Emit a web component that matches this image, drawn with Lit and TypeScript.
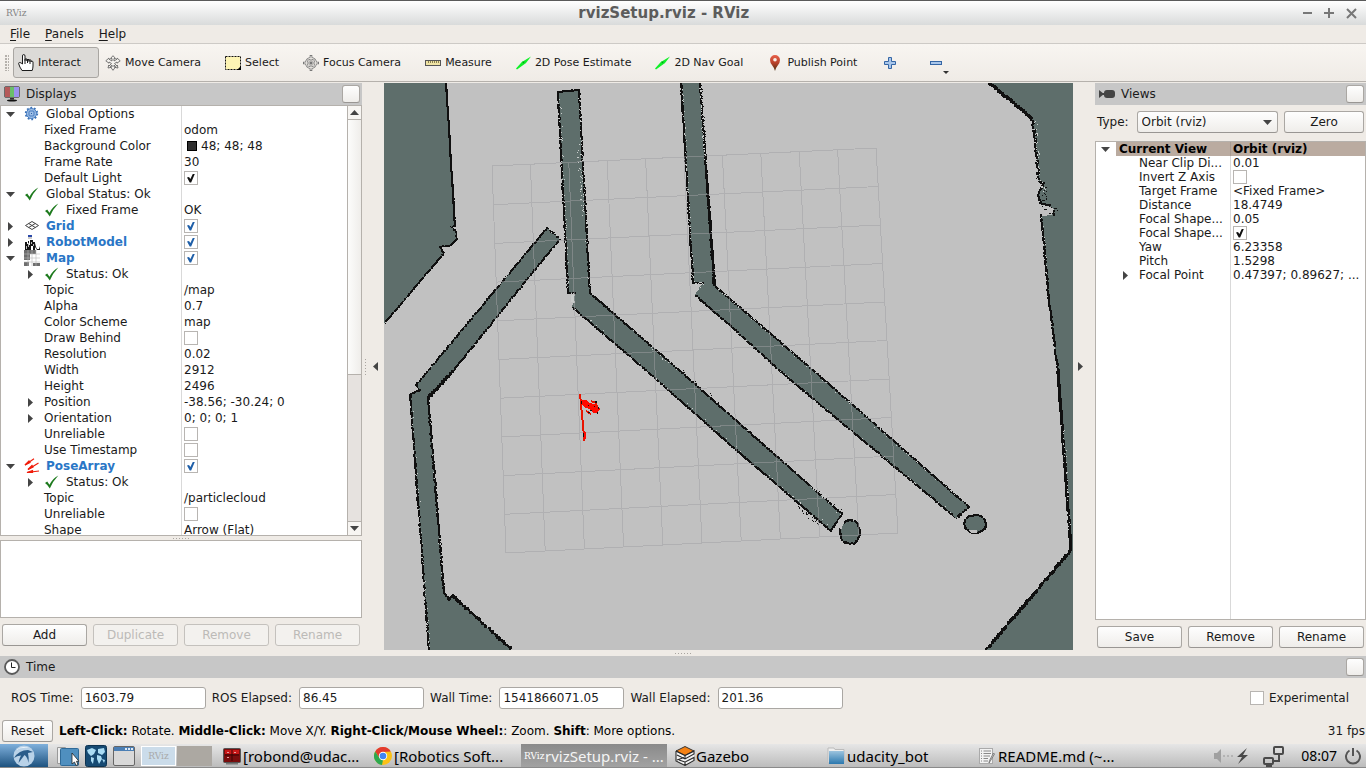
import { LitElement, html, css, svg, nothing } from "lit";
import { customElement, property } from "lit/decorators.js";
import { classMap } from "lit/directives/class-map.js";

interface Row {
  name: string;
  level?: number;
  arrow?: "open" | "closed";
  icon?: string;
  value?: string;
  check?: boolean;
  swatch?: boolean;
  bold?: boolean;
  head?: boolean;
}

/* ---------- icons ---------- */

const treeIcons: Record<string, unknown> = {
  gear: svg`<svg width="16" height="16" viewBox="0 0 16 16"><circle cx="7.500" cy="7.500" r="5.700" fill="none" stroke="#3a72b8" stroke-width="2" stroke-dasharray="1.800 1.780"/><circle cx="7.500" cy="7.500" r="5" fill="#9fc0e8" stroke="#4479bd"/><rect x="5" y="5" width="5" height="5" rx="1" fill="none" stroke="#4479bd"/><rect x="7" y="7" width="1" height="1" fill="#2f5f9f"/></svg>`,
  check: svg`<svg width="16" height="16" viewBox="0 0 16 16"><path d="M1 9l2.200-1.400 2.300 3.200Q8.500 4.500 14.300 1.500 9 7 5.800 14.500 4 11 1 9z" fill="#1d7a1d"/></svg>`,
  grid: svg`<svg width="16" height="16" viewBox="0 0 16 16"><path d="M1.500 7.500L8 3.500l6.500 4L8 11.500zM4.700 5.500l6.600 4M11.300 5.500l-6.600 4" fill="none" stroke="#444"/></svg>`,
  robot: svg`<svg width="16" height="16" viewBox="0 0 16 16"><rect x="4" y="1" width="4" height="2" fill="#2b49a8"/><rect x="4" y="3" width="4" height="2" fill="#ccc"/><path d="M1 8h2v2h1V7h1v4h1V6h3v2h2v1l1 4 1 2h2l1-3v4h-3l-2-3v3H9v-4H7v4H1z" fill="#141414"/><path d="M4 9h1v4H4zM7 8h1v2H7zM2 12h1v3H2zM9 10h1v2H9z" fill="#bbb"/></svg>`,
  map: svg`<svg width="16" height="16" viewBox="0 0 16 16"><rect width="16" height="16" fill="#fff"/><path d="M0 0h12v4H6v6H0zM0 12h5v4H0zM9 13h7v3H9z" fill="#6e6e6e"/><path d="M4 0v16M8 0v16M12 0v16M0 4h16M0 8h16M0 12h16" stroke="#bbb" stroke-width=".6" fill="none"/></svg>`,
  poses: svg`<svg width="16" height="16" viewBox="0 0 16 16"><g stroke="#f01c0a" stroke-width="1.200" fill="#f01c0a"><path d="M1 7L10 .8M4 11.500L14.500 5M3 14.500L15 13"/><path d="M1 7l4-4 1 1.500zM4 11.500l4-4 1 1.500zM3 14.500l5.500-2v2z"/></g></svg>`,
};

const hand = svg`<svg width="16" height="17" viewBox="0 0 16 17"><path d="M4.500 10V2q0-1.500 1.200-1.500T7 2v4.500V5h2v2V5.500h2v2-1.500h2v2q0-.8 1-.8t1 .8V12q0 2-.8 4.500H4Q1.500 13 .7 9.800.5 8.500 1.600 8.500 3 8.500 4.500 10z" fill="#fff" stroke="#1b1b1b"/><path d="M7 6v4M9.500 6v3M12 7v3" stroke="#1b1b1b" fill="none"/></svg>`;
const moveCam = svg`<svg width="16" height="16" viewBox="0 0 16 16"><path d="M8 .7l2.500 2.800H9V6l3-1.800V3l3.200 2.800L12 8.200V7L9.500 8.500 12 11l.2-1 .8 3-3-.6.800-.8L9 10v2h1.500L8 15.300 5.500 12H7v-2l-1.800 1.600.8.800-3 .6.800-3 .2 1 2.500-2.500L4 7v1.200L.8 5.800 4 3v1.200L7 6V3.500H5.500z" fill="#f4f2ee" stroke="#6a6a6a" stroke-width=".9"/></svg>`;
const selectIcon = svg`<svg width="16" height="14" viewBox="0 0 16 14"><rect x=".5" y=".5" width="15" height="13" fill="#fdf4b4" stroke="#111" stroke-dasharray="2 1"/><path d="M16 10v4h-4z" fill="#000"/></svg>`;
const focusIcon = svg`<svg width="16" height="16" viewBox="0 0 16 16"><circle cx="8" cy="8" r="4.800" fill="none" stroke="#777" stroke-width="2.400"/><path d="M8 0v16M0 8h16" stroke="#777" stroke-width="2.600"/><circle cx="8" cy="8" r="4.800" fill="none" stroke="#f0ede8" stroke-width="1"/><path d="M8 1v14M1 8h14" stroke="#f0ede8"/><rect x="7" y="7" width="2" height="2" fill="#777"/></svg>`;
const rulerIcon = svg`<svg width="16" height="16" viewBox="0 0 16 16"><rect x=".5" y="5.500" width="15" height="5" fill="#efe3a4" stroke="#555"/><path d="M3.500 6v2M5.500 6v2M7.500 6v2M9.500 6v2M11.500 6v2M13.500 6v2" stroke="#8a8050"/></svg>`;
const greenArrow = svg`<svg width="15" height="14" viewBox="0 0 15 14"><path d="M0 12.500L6.500 5.300l1-.2L15 .5l-5.200 6.700-.8.600L1 13.500z" fill="#10f028"/><path d="M6.500 6l2.300-.5-1.300 2z" fill="#0a8f1a"/></svg>`;
const pinIcon = svg`<svg width="16" height="16" viewBox="0 0 16 16"><defs><linearGradient id="pin" x2="0" y2="1"><stop offset="0" stop-color="#e8604a"/><stop offset=".5" stop-color="#b8412a"/><stop offset="1" stop-color="#4a3010"/></linearGradient></defs><path d="M8 0a5 5 0 0 1 5 5q0 3-2.300 5.500Q8.600 13 8 16q-.6-3-2.700-5.500Q3 8 3 5a5 5 0 0 1 5-5z" fill="url(#pin)"/><circle cx="8" cy="4.800" r="1.800" fill="#f6efe8"/></svg>`;
const plusIcon = svg`<svg width="12" height="12" viewBox="0 0 12 12"><path d="M4.500.5h3v4h4v3h-4v4h-3v-4h-4v-3h4z" fill="#a9c6ea" stroke="#3566a5"/></svg>`;
const minusIcon = svg`<svg width="12" height="12" viewBox="0 0 12 12"><rect x=".5" y="4.500" width="11" height="3" fill="#a9c6ea" stroke="#3566a5"/></svg>`;
const monitorIcon = svg`<svg width="16" height="16" viewBox="0 0 16 16"><rect x=".5" y=".5" width="15" height="11" rx="1" fill="#111"/><rect x="1" y="1" width="5" height="10" fill="#b55a5a"/><rect x="6" y="1" width="4" height="10" fill="#6abf6a"/><rect x="10" y="1" width="5" height="10" fill="#9a92ee"/><path d="M6 12h4v1.500H6z" fill="#333"/><ellipse cx="8" cy="14.500" rx="5" ry="1" fill="#111"/></svg>`;
const cameraIcon = svg`<svg width="16" height="10" viewBox="0 0 16 10"><rect x="5" y="1" width="11" height="8" rx="3" fill="#444"/><path d="M0 1l5 4-5 4z" fill="#444"/><path d="M3 4h3v2H3z" fill="#444"/></svg>`;
const clockIcon = svg`<svg width="16" height="16" viewBox="0 0 16 16"><circle cx="8" cy="8" r="7" fill="#fff" stroke="#5a5a5a" stroke-width="1.800"/><path d="M7.500 3.500v5h4" fill="none" stroke="#222"/></svg>`;
const triangle = (dir: string) => svg`<svg width="9" height="9" viewBox="0 0 9 9"><path d=${dir === "down" ? "M0 2h9L4.500 7z" : dir === "up" ? "M0 7h9L4.500 2z" : dir === "left" ? "M7 0v9L2 4.500z" : "M2 0v9L7 4.500z"} fill="#444"/></svg>`;

/* ---------- property tree ---------- */

@customElement("property-tree")
export class PropertyTree extends LitElement {
  @property({ attribute: false }) rows: Row[] = [];
  @property() label = "";
  @property({ type: Boolean, reflect: true }) dense = false;

  static styles = css`
    :host {
      display: block;
      flex: 1;
      min-width: 0;
      overflow: hidden;
      --split: 181px;
      --row: 16px;
      background: linear-gradient(#d9d9d9, #d9d9d9) calc(var(--split) - 1px) 0 / 1px 100% no-repeat #fff;
    }
    :host([dense]) {
      --split: 135px;
      --row: 14px;
    }
    .tree {
      width: 100%;
      table-layout: fixed;
      border-collapse: collapse;
      font: 12px "DejaVu Sans", sans-serif;
      color: #1a1a1a;
    }
    .key { width: var(--split); }
    .cell { padding: 0; height: var(--row); }
    .line {
      display: flex;
      align-items: center;
      height: var(--row);
      line-height: var(--row);
      white-space: nowrap;
      overflow: hidden;
    }
    .indent { flex: none; width: 20px; }
    .twist {
      flex: none;
      box-sizing: border-box;
      width: 20px;
      height: var(--row);
      padding-right: 2px;
      display: grid;
      place-items: center;
      background: #fff;
    }
    .name { padding-left: 3px; }
    .icon { display: flex; flex: none; width: 16px; margin: 0 3px; }
    .value { padding-left: 2px; }
    .bold { font-weight: bold; color: #2a76c6; }
    .head { background: #baaba0; font-weight: bold; color: #000; }
    .head .key-cell { box-shadow: inset -1px 0 #a89b92; }
    .swatch {
      width: 8px;
      height: 8px;
      margin: 0 4px 0 3px;
      border: 1px solid #000;
      background: #303030;
    }
    .box {
      appearance: none;
      flex: none;
      width: 14px;
      height: 14px;
      margin: 0;
      border: 1px solid #b8b5b2;
      background: #fff;
      color: #111;
      display: grid;
      place-items: center;
    }
    .blue { color: #1f5fa8; }
    .box:checked::before {
      content: "";
      width: 8px;
      height: 9px;
      background: currentColor;
      clip-path: polygon(0 45%, 25% 38%, 42% 62%, 75% 0, 100% 0, 52% 100%, 34% 100%);
    }
  `;

  render() {
    return html`<table class="tree" aria-label=${this.label}>
      <colgroup><col class="key" /><col /></colgroup>
      <tbody>
        ${this.rows.map(
          (r) => html`<tr class=${classMap({ head: !!r.head })}>
            <td class="cell key-cell">
              <div class="line">
                ${r.level ? html`<span class="indent"></span>` : nothing}
                <span class="twist">${r.arrow ? triangle(r.arrow === "open" ? "down" : "right") : nothing}</span>
                ${r.icon ? html`<span class="icon">${treeIcons[r.icon]}</span>` : nothing}
                <span class=${classMap({ name: true, bold: !!r.bold })}>${r.name}</span>
              </div>
            </td>
            <td class="cell">
              <div class="line value">
                ${r.swatch ? html`<span class="swatch"></span>` : nothing}
                ${r.check !== undefined
                  ? html`<input type="checkbox" class=${classMap({ box: true, blue: !!r.bold })} aria-label=${r.name} .checked=${r.check} />`
                  : r.value ?? nothing}
              </div>
            </td>
          </tr>`,
        )}
      </tbody>
    </table>`;
  }
}

/* ---------- occupancy map ---------- */

type Pt = [number, number];

let seed = 7;
const rnd = () => {
  seed = (seed * 1103515245 + 12345) % 2147483648;
  return seed / 2147483648;
};

/* Scan line made of single cells, so that its edge stays ragged. */
function scan(points: Pt[], size: number, spread: number, density: number): string {
  let d = "";
  for (let k = 0; k + 1 < points.length; k++) {
    const [x1, y1] = points[k];
    const [x2, y2] = points[k + 1];
    const n = Math.ceil(Math.max(Math.abs(x2 - x1), Math.abs(y2 - y1)));
    for (let i = 0; i < n; i++) {
      if (rnd() > density) continue;
      const x = Math.round(x1 + ((x2 - x1) * i) / n + (rnd() - 0.5) * spread - size / 2);
      const y = Math.round(y1 + ((y2 - y1) * i) / n + (rnd() - 0.5) * spread - size / 2);
      d += `M${x} ${y}h${size}v${size}h-${size}z`;
    }
  }
  return d;
}

const poly = (p: Pt[]) => p.map((q) => q.join(",")).join(" ");

const west: Pt[] = [[446, 82], [455, 226], [451, 227], [456, 231], [457, 239], [450, 246], [440, 247], [444, 253], [384, 324]];
const wallA: Pt[] = [[573, 304], [575, 293], [568, 293], [558, 92], [579, 90], [590, 293], [680, 371], [842, 514], [831, 531], [734, 448], [649, 373], [571, 306]];
const wallB: Pt[] = [[699, 288], [703, 283], [693, 283], [681, 82], [700, 82], [715, 286], [814, 371], [969, 507], [956, 518], [780, 371], [734, 329], [695, 295]];
const wallC: Pt[] = [[429, 650], [410, 394], [420, 390], [416, 385], [427, 372], [547, 228], [560, 239], [453, 371], [428, 398], [444, 592], [449, 600], [452, 595], [512, 650]];
const east: Pt[] = [[988, 82], [1032, 118], [1035, 137], [1039, 182], [1044, 184], [1040, 189], [1038, 196], [1041, 203], [1050, 206], [1053, 211], [1041, 215], [1044, 244], [1048, 291], [1058, 371], [1071, 550], [986, 650]];

const ring = (cx: number, cy: number, rx: number, ry: number): Pt[] =>
  Array.from({ length: 25 }, (_, i) => {
    const a = (i / 24) * Math.PI * 2;
    return [cx + rx * Math.cos(a), cy + ry * Math.sin(a)] as Pt;
  });

const darkCells = [
  scan(west.slice(0, 2), 2, 0.4, 1),
  scan(west.slice(1), 1, 1, 1),
  scan(west.slice(1), 2, 0.6, 0.7),
  scan(wallA.slice(1), 1, 1.2, 1),
  scan(wallA.slice(1), 2, 0.8, 0.75),
  scan(wallB.slice(1), 1, 1.2, 1),
  scan(wallB.slice(1), 2, 0.8, 0.75),
  scan(wallC.slice(0, 8), 1, 1.2, 1),
  scan(wallC.slice(0, 8), 2, 1, 0.6),
  scan(wallC.slice(7, 10), 2, 1.4, 0.95),
  scan(wallC.slice(7, 9), 3, 0.8, 0.7),
  scan(wallC.slice(9, 12), 2, 1, 0.8),
  scan(wallC.slice(11), 2, 1.4, 0.95),
  scan(wallC.slice(11), 3, 0.6, 0.4),
  scan(east.slice(0, 2), 3, 0.8, 0.95),
  scan(east.slice(1, 11), 2, 2, 0.8),
  scan(east.slice(10, 12), 2, 1, 0.8),
  scan(east.slice(11), 2, 1.4, 0.95),
  scan(east.slice(13), 3, 0.6, 0.6),
  scan([[681, 370], [720, 404]], 1, 3, 0.35),
  scan([[798, 507], [822, 528]], 1, 3, 0.6),
  scan([[816, 490], [843, 512]], 1, 3, 0.6),
  scan([[701, 84], [706, 160]], 1, 3, 0.7),
  scan([[704, 140], [714, 286]], 2, 1, 0.9),
  scan([[1038, 180], [1046, 192], [1042, 205], [1055, 212], [1044, 216]], 1, 5, 0.8),
  scan([[447, 348], [463, 329]], 1, 2, 0.5),
  scan(ring(850, 532, 10, 12), 2, 0.8, 0.85),
  scan(ring(975, 524, 11, 9), 2, 0.8, 0.8),
].join("");

const paleCells = [
  scan([[560, 100], [568, 290]], 1, 3, 0.22),
  scan([[580, 95], [582, 142]], 1, 3, 0.3),
  scan([[580, 142], [584, 215]], 1, 6, 0.8),
  scan([[585, 215], [589, 290]], 1, 3, 0.15),
  scan([[682, 84], [694, 284]], 1, 2, 0.2),
  scan([[701, 84], [706, 165]], 1, 4, 0.7),
  scan([[716, 287], [968, 506]], 1, 3, 0.25),
  scan([[780, 371], [955, 516]], 1, 3, 0.15),
  scan([[576, 308], [832, 530]], 1, 3, 0.15),
  scan([[650, 346], [680, 371]], 1, 4, 0.4),
  scan([[812, 486], [842, 514]], 1, 5, 0.8),
  scan([[411, 396], [429, 650]], 1, 3, 0.18),
  scan([[430, 400], [443, 590]], 1, 3, 0.12),
  scan([[549, 229], [560, 238]], 1, 3, 0.7),
  scan([[1035, 120], [1040, 180]], 1, 4, 0.4),
  scan([[1040, 182], [1045, 192]], 1, 6, 0.9),
  scan([[1042, 217], [1048, 291]], 1, 3, 0.25),
  scan([[1064, 430], [1070, 545]], 1, 3, 0.3),
  scan([[694, 284], [703, 283], [698, 289]], 1, 3, 0.9),
  scan([[572, 296], [573, 304]], 2, 2, 0.9),
].join("");

const gridLines = (() => {
  const tl: Pt = [492, 166], tr: Pt = [876, 148], bl: Pt = [506, 553], br: Pt = [898, 533];
  const mix = (a: Pt, b: Pt, t: number) => `${(a[0] + (b[0] - a[0]) * t).toFixed(1)} ${(a[1] + (b[1] - a[1]) * t).toFixed(1)}`;
  let d = "";
  for (let i = 0; i <= 10; i++) {
    const t = i / 10;
    d += `M${mix(tl, tr, t)}L${mix(bl, br, t)}M${mix(tl, bl, t)}L${mix(tr, br, t)}`;
  }
  return d;
})();

@customElement("map-view")
export class MapView extends LitElement {
  static styles = css`
    :host { display: block; min-width: 0; min-height: 0; overflow: hidden; background: #c1c1c1; }
    .scene { display: block; width: 100%; height: 100%; }
    .unknown { fill: #5e6e6b; }
    .free { fill: #c1c1c1; }
    .dark { fill: #101010; }
    .pale { fill: #c9cccb; }
    .grid { fill: none; stroke: #a0a0a4; stroke-opacity: 0.5; }
    .red { fill: #ff0a00; }
    .redline { stroke: #e81400; stroke-width: 2; fill: none; }
  `;

  render() {
    return html`<svg class="scene" viewBox="384 83 689 567" preserveAspectRatio="xMidYMid slice" shape-rendering="crispEdges" role="img" aria-label="Map">
      <polygon class="unknown" points=${poly([[380, 80], ...west, [380, 330]])} />
      <polygon class="unknown" points=${poly(wallA)} />
      <polygon class="unknown" points=${poly(wallB)} />
      <polygon class="unknown" points=${poly([...wallC, [512, 655], [429, 655]])} />
      <polygon class="unknown" points=${poly([...east, [986, 655], [1080, 655], [1080, 80]])} />
      <polygon class="unknown" points=${poly(ring(850, 532, 10, 12))} />
      <polygon class="unknown" points=${poly(ring(975, 524, 11, 9))} />
      <path class="dark" d=${darkCells} />
      <path class="pale" d=${paleCells} />
      <path class="free" d="M1040 208l8-2 6 3-2 6-10 1zM968 530l3 3h6v-3zM838 520l6-6 3 3-5 8zM839 527l3-5 2 1-3 7z" />
      <path class="dark" d="M1044 209h3v1h-3zM1049 213h2v1h-2zM1054 208h3v1h-3zM1053 213h2v3h-2zM958 518h2v-2h2v-2h-1v1h-2v2h-1z" />
      <path class="grid" d=${gridLines} />
      <path class="redline" d="M580 394L584.500 441" />
      <path class="red" d="M583 432h3v7h-2zM581 400h5l4 3 4 1 4 2 2 3-3 4h-4l-3-4-5-1-4-4z" />
      <path class="redline" d="M591 401l5 2 1 4M586 411l5 3" />
      <path class="dark" d="M595 401h2v2h-2zM588 405h1v1h-1zM598 407h1v2h-1zM590 410h2v1h-2zM588 412h2v1h-2zM581 401h1v3h-1zM597 412h1v2h-1zM583 433h1v4h-1zM594 406h1v1h-1z" />
    </svg>`;
  }
}

/* ---------- data ---------- */

const displayRows: Row[] = [
  { name: "Global Options", arrow: "open", icon: "gear" },
  { name: "Fixed Frame", level: 1, value: "odom" },
  { name: "Background Color", level: 1, value: "48; 48; 48", swatch: true },
  { name: "Frame Rate", level: 1, value: "30" },
  { name: "Default Light", level: 1, check: true },
  { name: "Global Status: Ok", arrow: "open", icon: "check" },
  { name: "Fixed Frame", level: 1, icon: "check", value: "OK" },
  { name: "Grid", arrow: "closed", icon: "grid", bold: true, check: true },
  { name: "RobotModel", arrow: "closed", icon: "robot", bold: true, check: true },
  { name: "Map", arrow: "open", icon: "map", bold: true, check: true },
  { name: "Status: Ok", level: 1, arrow: "closed", icon: "check" },
  { name: "Topic", level: 1, value: "/map" },
  { name: "Alpha", level: 1, value: "0.7" },
  { name: "Color Scheme", level: 1, value: "map" },
  { name: "Draw Behind", level: 1, check: false },
  { name: "Resolution", level: 1, value: "0.02" },
  { name: "Width", level: 1, value: "2912" },
  { name: "Height", level: 1, value: "2496" },
  { name: "Position", level: 1, arrow: "closed", value: "-38.56; -30.24; 0" },
  { name: "Orientation", level: 1, arrow: "closed", value: "0; 0; 0; 1" },
  { name: "Unreliable", level: 1, check: false },
  { name: "Use Timestamp", level: 1, check: false },
  { name: "PoseArray", arrow: "open", icon: "poses", bold: true, check: true },
  { name: "Status: Ok", level: 1, arrow: "closed", icon: "check" },
  { name: "Topic", level: 1, value: "/particlecloud" },
  { name: "Unreliable", level: 1, check: false },
  { name: "Shape", level: 1, value: "Arrow (Flat)" },
];

const viewRows: Row[] = [
  { name: "Current View", arrow: "open", value: "Orbit (rviz)", head: true },
  { name: "Near Clip Di...", level: 1, value: "0.01" },
  { name: "Invert Z Axis", level: 1, check: false },
  { name: "Target Frame", level: 1, value: "<Fixed Frame>" },
  { name: "Distance", level: 1, value: "18.4749" },
  { name: "Focal Shape...", level: 1, value: "0.05" },
  { name: "Focal Shape...", level: 1, check: true },
  { name: "Yaw", level: 1, value: "6.23358" },
  { name: "Pitch", level: 1, value: "1.5298" },
  { name: "Focal Point", level: 1, arrow: "closed", value: "0.47397; 0.89627; ..." },
];

const tools: [string, unknown][] = [
  ["Interact", hand],
  ["Move Camera", moveCam],
  ["Select", selectIcon],
  ["Focus Camera", focusIcon],
  ["Measure", rulerIcon],
  ["2D Pose Estimate", greenArrow],
  ["2D Nav Goal", greenArrow],
  ["Publish Point", pinIcon],
];

const times: [string, string, string][] = [
  ["ros-time", "ROS Time:", "1603.79"],
  ["ros-elapsed", "ROS Elapsed:", "86.45"],
  ["wall-time", "Wall Time:", "1541866071.05"],
  ["wall-elapsed", "Wall Elapsed:", "201.36"],
];

const tasks: [string, unknown][] = [
  ["[robond@udac...", svg`<svg width="18" height="18" viewBox="0 0 18 18"><rect x=".5" y="1.500" width="17" height="14" rx="1" fill="#7a0d0d" stroke="#555"/><path d="M2 3h14v4H2z" fill="#c81818"/><path d="M9 3v11M2 8h14" stroke="#3a0505"/><path d="M3 16h12v1.500H3z" fill="#777"/><path d="M4 5h2v1H4zM11 5h2v1h-2zM4 10h2v1H4z" fill="#e8a0a0"/></svg>`],
  ["[Robotics Soft...", svg`<svg width="18" height="18" viewBox="0 0 18 18"><circle cx="9" cy="9" r="9" fill="#fbc116"/><path d="M1.200 4.500A9 9 0 0 1 16.800 4.500L9 5 5.500 11z" fill="#e33b2e"/><path d="M1.200 4.500L5.500 11 9 13l-1 5A9 9 0 0 1 1.200 4.500z" fill="#2da94f"/><circle cx="9" cy="9" r="4.200" fill="#fff"/><circle cx="9" cy="9" r="3.300" fill="#4285f4"/></svg>`],
  ["rvizSetup.rviz - ...", nothing],
  ["Gazebo", svg`<svg width="20" height="20" viewBox="0 0 20 20"><path d="M1 5v10l9 5 9-5V5L10 .5z" fill="#f2f2f2"/><path d="M10 .5l9 4.500-9 4.500L1 5z" fill="#f58113" stroke="#333"/><path d="M1 5v10l9 4.500M1 5l9 4.500 9-4.500v3l-9 5-8-4M10 9.500v3M10 19.500l9-5v-3l-9 4.500zM2 14l7-2.500M10 16l-6-2" fill="none" stroke="#2a2a2a" stroke-width="1.100"/></svg>`],
  ["udacity_bot", svg`<svg width="18" height="18" viewBox="0 0 18 18"><defs><linearGradient id="fold" x2="0" y2="1"><stop offset="0" stop-color="#9cc3de"/><stop offset="1" stop-color="#2b78ae"/></linearGradient></defs><path d="M1 1h6l1 1.500h9V16H1z" fill="#eee" stroke="#bbb"/><path d="M2 4h15v13H2z" fill="url(#fold)"/></svg>`],
  ["README.md (~...", svg`<svg width="16" height="16" viewBox="0 0 16 16"><rect x=".5" y=".5" width="13" height="15" fill="#f2f2f2" stroke="#aaa"/><path d="M2 3h1M2 5.500h1M2 8h1M2 10.500h1M2 13h1M4.500 3H12M4.500 5.500H12M4.500 8H11M4.500 10.500H9M4.500 13H9" stroke="#888"/><path d="M15.500 6L11 13.500l-1 1.500.5-2.500L14.500 5z" fill="#ddd" stroke="#666" stroke-width=".8"/></svg>`],
];

/* ---------- page ---------- */

@customElement("app-root")
export class AppRoot extends LitElement {
  static styles = css`
    :host {
      display: flex;
      flex-direction: column;
      height: 100vh;
      overflow: hidden;
      background: #efebe6;
      color: #1a1a1a;
      font: 12px/16px "DejaVu Sans", sans-serif;
    }
    button, input, select { font: inherit; color: inherit; margin: 0; }
    svg { display: block; flex: none; }

    .titlebar {
      flex: none;
      display: flex;
      align-items: center;
      box-sizing: border-box;
      height: 25px;
      padding: 0 9px 0 6px;
      border-top: 1px solid #5a5a5a;
      background: linear-gradient(#fff, #d9dbdb);
    }
    .rviz { font: 9px "DejaVu Serif", serif; color: #858585; }
    .title { flex: 1; margin: 0; text-align: center; font: bold 15px/22px "DejaVu Sans", sans-serif; color: #5c5c5c; }
    .winbtns { display: flex; justify-content: flex-end; gap: 10px; }
    .winbtn { display: grid; place-items: center; width: 12px; height: 16px; padding: 0; border: 0; background: none; }

    .menubar {
      flex: none;
      display: flex;
      gap: 15px;
      height: 18px;
      padding-left: 10px;
      border-bottom: 1px solid #cdcac6;
    }
    .menu { padding: 0; border: 0; background: none; line-height: 17px; }
    .key { text-decoration: underline; text-underline-offset: 2px; }

    .toolbar {
      flex: none;
      display: flex;
      align-items: center;
      gap: 1px;
      box-sizing: border-box;
      height: 38px;
      margin-bottom: 1px;
      border-bottom: 1px solid #b5b1ac;
      background: linear-gradient(#f8f5f1, #efebe6);
      padding-left: 5px;
    }
    .grip { width: 4px; height: 16px; margin-right: 3px; background: radial-gradient(circle at 1px 1px, #b5b1ac 1px, transparent 1px) 0 0 / 3px 3px; }
    .tool {
      display: flex;
      align-items: center;
      gap: 4px;
      box-sizing: border-box;
      height: 31px;
      padding: 0 17px 0 4px;
      border: 1px solid transparent;
      border-radius: 3px;
      background: none;
      font-size: 11px;
      white-space: nowrap;
    }
    .tool.on { border-color: #a9a6a2; background: #dcdad7; }
    .tool.mark { width: 45px; padding: 0 0 0 7px; position: relative; }
    .drop { position: absolute; right: 17px; bottom: 2px; }

    .main {
      flex: 1;
      min-height: 0;
      display: grid;
      grid-template-columns: 362px 22px minmax(0, 1fr) 22px 271px;
      grid-template-rows: minmax(0, 1fr);
    }
    .dock { display: flex; flex-direction: column; min-height: 0; }
    .bar {
      flex: none;
      display: flex;
      align-items: center;
      gap: 6px;
      box-sizing: border-box;
      height: 22px;
      padding: 0 2px 0 4px;
      background: #c7c7c7;
    }
    .bar-title { flex: 1; margin: 0; font: 12px/22px "DejaVu Sans", sans-serif; }
    .btn {
      box-sizing: border-box;
      height: 22px;
      padding: 0;
      border: 1px solid #aaa7a3;
      border-bottom-color: #999693;
      border-radius: 3px;
      background: linear-gradient(#fefefe, #efedea);
      line-height: 18px;
    }
    .btn:disabled { color: #bcbab7; border-color: #c4c1bd; background: #f3f1ee; }
    .float { width: 18px; height: 18px; }
    .frame { flex: 1; min-height: 0; display: flex; border: 1px solid #b5b1ac; background: #fff; }
    .scroll { flex: none; width: 13px; display: flex; flex-direction: column; border-left: 1px solid #b5b1ac; background: #e6e2df; }
    .arrow-btn { display: grid; place-items: center; height: 13px; padding: 0; border: 0; background: #f7f5f2; }
    .thumb { flex: 255; border: solid #b5b1ac; border-width: 1px 0; background: linear-gradient(90deg, #fcfcfb, #efedea); }
    .track { flex: 147; border-bottom: 1px solid #b5b1ac; }
    .hgrip { flex: none; height: 4px; display: grid; place-items: center; }
    .dots { width: 16px; height: 1px; background: repeating-linear-gradient(90deg, #a9a5a0 0 1px, transparent 1px 3px); }
    .vdots { width: 1px; height: 16px; background: repeating-linear-gradient(#a9a5a0 0 1px, transparent 1px 3px); }
    .info { flex: none; box-sizing: border-box; height: 78px; border: 1px solid #b5b1ac; background: #fff; }
    .actions { flex: none; display: grid; grid-auto-flow: column; grid-auto-columns: 1fr; gap: 6px; padding: 6px 2px 4px; }
    .actions.tight { padding-bottom: 2px; }
    .edge { display: flex; align-items: center; gap: 5px; padding: 0 3px; border: 0; background: none; }

    .type { flex: none; display: flex; align-items: center; gap: 6px; padding: 6px 2px 8px; }
    .picker { position: relative; flex: 1; margin-left: 2px; }
    .select { appearance: none; width: 100%; text-align: left; padding: 0 20px 0 4px; }
    .picker-arrow { position: absolute; right: 6px; top: 7px; pointer-events: none; }
    .zero { width: 80px; }

    .seam { flex: none; height: 6px; display: grid; place-items: center; }
    .times { flex: none; display: flex; align-items: center; gap: 6px; height: 40px; padding: 0 17px 0 11px; }
    .caption { padding-right: 1px; }
    .field {
      box-sizing: border-box;
      width: 125px;
      height: 22px;
      padding: 0 3px;
      border: 1px solid #aaa7a3;
      border-radius: 3px;
      background: #fff;
    }
    .push { margin-left: auto; display: flex; align-items: center; gap: 5px; }
    .tick { appearance: none; box-sizing: border-box; width: 14px; height: 14px; border: 1px solid #b8b5b2; background: #fff; }
    .status { flex: none; display: flex; align-items: center; gap: 6px; height: 26px; padding: 0 1px 0 2px; white-space: nowrap; }
    .reset { width: 51px; line-height: 19px; }
    .help { flex: 1; margin: 0; color: #000; }

    .taskbar {
      flex: none;
      display: flex;
      align-items: center;
      box-sizing: border-box;
      height: 24px;
      border-bottom: 1px solid #8a8a8a;
      background: linear-gradient(#e6e6e6, #bcbcbc);
      font: 15px/22px "Noto Sans", sans-serif;
      color: #000;
    }
    .start { display: grid; place-items: center; align-self: stretch; width: 48px; margin-right: 9px; padding: 0; border: 0; background: linear-gradient(#7fb0dc, #1d527f); }
    .launch { display: flex; gap: 6px; margin-right: 6px; }
    .quick { padding: 0; border: 0; background: none; }
    .pager { display: flex; gap: 1px; margin-right: 7px; }
    .desk { box-sizing: border-box; display: grid; place-items: center; width: 35px; height: 20px; padding: 0; border: 0; background: #aca8a2; }
    .desk.on { border: 1px solid #fff; background: #cbdcea; color: #a9a9a9; }
    .tasks { flex: 1; min-width: 0; display: flex; gap: 5px; align-self: stretch; }
    .task { flex: none; display: flex; align-items: center; gap: 1px; box-sizing: border-box; width: 146px; padding: 0 0 0 3px; border: 0; background: none; white-space: nowrap; overflow: hidden; }
    .task.on { background: linear-gradient(#8a8a8a, #a2a2a2); color: #f4f4f4; }
    .slot { flex: none; width: 20px; display: grid; place-items: center; }
    .white { color: #fff; }
    .tray { display: flex; align-items: center; gap: 6px; padding-right: 4px; }
    .clock { padding: 0 1px 0 6px; font-size: 14px; }
  `;

  render() {
    return html`
      <header class="titlebar">
        <span class="rviz">RViz</span>
        <h1 class="title">rvizSetup.rviz - RViz</h1>
        <div class="winbtns">
          <button class="winbtn" aria-label="Minimize"><svg width="11" height="11"><path d="M1 5h9" stroke="#777" stroke-width="2" /></svg></button>
          <button class="winbtn" aria-label="Maximize"><svg width="11" height="11"><path d="M0 5h10M5 0v10" stroke="#777" stroke-width="2" /></svg></button>
          <button class="winbtn" aria-label="Close"><svg width="11" height="11"><path d="M1 1l9 9M10 1l-9 9" stroke="#777" stroke-width="2" /></svg></button>
        </div>
      </header>

      <nav class="menubar">
        <button class="menu"><span class="key">F</span>ile</button>
        <button class="menu"><span class="key">P</span>anels</button>
        <button class="menu"><span class="key">H</span>elp</button>
      </nav>

      <div class="toolbar">
        <span class="grip"></span>
        ${tools.map(([name, icon], i) => html`<button class=${classMap({ tool: true, on: i === 0 })}>${icon}<span>${name}</span></button>`)}
        <button class="tool mark" aria-label="Add tool">${plusIcon}</button>
        <button class="tool mark" aria-label="Remove tool">${minusIcon}
          <svg class="drop" width="6" height="4"><path d="M0 0h6L3 3z" fill="#333" /></svg>
        </button>
      </div>

      <main class="main">
        <section class="dock">
          <div class="bar">${monitorIcon}<h2 class="bar-title">Displays</h2><button class="btn float" aria-label="Close Displays"></button></div>
          <div class="frame">
            <property-tree .rows=${displayRows} label="Displays"></property-tree>
            <div class="scroll">
              <button class="arrow-btn" aria-label="Scroll up">${triangle("up")}</button>
              <div class="thumb"></div>
              <div class="track"></div>
              <button class="arrow-btn" aria-label="Scroll down">${triangle("down")}</button>
            </div>
          </div>
          <div class="hgrip"><span class="dots"></span></div>
          <div class="info"></div>
          <div class="actions">
            <button class="btn">Add</button>
            <button class="btn" disabled>Duplicate</button>
            <button class="btn" disabled>Remove</button>
            <button class="btn" disabled>Rename</button>
          </div>
        </section>
        <button class="edge" aria-label="Hide left dock"><span class="vdots"></span>${triangle("left")}</button>
        <map-view></map-view>
        <button class="edge" aria-label="Hide right dock">${triangle("right")}</button>
        <section class="dock">
          <div class="bar">${cameraIcon}<h2 class="bar-title">Views</h2><button class="btn float" aria-label="Close Views"></button></div>
          <div class="type">
            <label for="view-type">Type:</label>
            <div class="picker">
              <select id="view-type" class="btn select"><option>Orbit (rviz)</option></select>
              <span class="picker-arrow">${triangle("down")}</span>
            </div>
            <button class="btn zero">Zero</button>
          </div>
          <div class="frame"><property-tree dense .rows=${viewRows} label="Views"></property-tree></div>
          <div class="actions tight">
            <button class="btn">Save</button>
            <button class="btn">Remove</button>
            <button class="btn">Rename</button>
          </div>
        </section>
      </main>

      <div class="seam"><span class="dots"></span></div>
      <div class="bar">${clockIcon}<h2 class="bar-title">Time</h2><button class="btn float" aria-label="Close Time"></button></div>
      <div class="times">
        ${times.map(([id, label, value]) => html`<label class="caption" for=${id}>${label}</label><input id=${id} class="field" type="text" readonly .value=${value} />`)}
        <label class="push"><input class="tick" type="checkbox" />Experimental</label>
      </div>
      <div class="status">
        <button class="btn reset">Reset</button>
        <p class="help"><b>Left-Click:</b> Rotate. <b>Middle-Click:</b> Move X/Y. <b>Right-Click/Mouse Wheel:</b>: Zoom. <b>Shift</b>: More options.</p>
        <span>31 fps</span>
      </div>

      <footer class="taskbar">
        <button class="start" aria-label="Menu">
          <svg width="22" height="22" viewBox="0 0 22 22"><circle cx="11" cy="11" r="10.500" fill="#b9d2e8" /><path d="M1 13Q6 5 15 5l5 2-5 1q1 4 .5 10-1-6-4-8-3 4-6 8 1-5 2.500-7.500Q4 10.500 1 13z" fill="#2a5c8a" /><path d="M3 5q6-5 13-2-8-1-13 2z" fill="#f0f6fb" /></svg>
        </button>
        <div class="launch">
          <button class="quick" aria-label="File manager"><svg width="22" height="22" viewBox="0 0 22 22"><path d="M.5 2.500h8l1 2h8v14H.5z" fill="#eee" stroke="#999" /><rect x="3.500" y="3.500" width="18" height="17" rx="1" fill="#4f8fbf" stroke="#2f6a98" /><path d="M15 8v11l2.500-2 1.500 3.500 2-1-1.500-3.200H22z" fill="#fff" stroke="#222" stroke-width=".8" /></svg></button>
          <button class="quick" aria-label="Web browser"><svg width="22" height="22" viewBox="0 0 22 22"><rect x=".5" y=".5" width="21" height="21" rx="2" fill="#164a73" stroke="#0e3350" /><path d="M2 5l5-2 4 2-2 4-3 2-3-3zM6 12l3 1-1 6-2-3zM13 4l6-1 1 4-3 3-4-2zM12 10l4 1 1 3-3 5-2-5zM17 14l3 1-1 3z" fill="#a9dcf5" /></svg></button>
          <button class="quick" aria-label="Show desktop"><svg width="22" height="22" viewBox="0 0 22 22"><rect x=".5" y="1.500" width="21" height="19" rx="1.500" fill="#d9d9d9" stroke="#666" /><rect x="1" y="2" width="20" height="4" fill="#4b7fb5" /><path d="M12 4h2M15 4h2M18 4h2" stroke="#dfeaf5" stroke-width="2" /></svg></button>
        </div>
        <div class="pager">
          <button class="desk on rviz" aria-label="Desktop 1">RViz</button>
          <button class="desk" aria-label="Desktop 2"></button>
        </div>
        <div class="tasks">
          ${tasks.map(([name, icon], i) => html`<button class=${classMap({ task: true, on: i === 2 })}><span class="slot">${icon === nothing ? html`<span class="rviz white">RViz</span>` : icon}</span><span>${name}</span></button>`)}
        </div>
        <div class="tray">
          <svg width="36" height="18" viewBox="0 0 36 18"><path d="M1 6h3l4-4v14l-4-4H1z" fill="#a0a0a0" /><path d="M10 9h2M14 9h2M18 9h2" stroke="#aaa" stroke-width="1.500" /><path d="M34 1L24 10h5l-4 7 10-9h-5z" fill="#4a4a4a" /></svg>
          <svg width="34" height="22" viewBox="0 0 34 22"><g fill="none" stroke="#4a4a4a" stroke-width="2"><rect x="19" y="2" width="9" height="7" rx="1" /><rect x="9" y="13" width="9" height="6" rx="1" /><path d="M24 9v7h-6M11 21h6" /></g></svg>
          <time class="clock">08:07</time>
          <svg width="18" height="18" viewBox="0 0 18 18"><path d="M5.500 3.500a7 7 0 1 0 7 0M9 1v8" fill="none" stroke="#555" stroke-width="2" /></svg>
        </div>
      </footer>
    `;
  }
}
